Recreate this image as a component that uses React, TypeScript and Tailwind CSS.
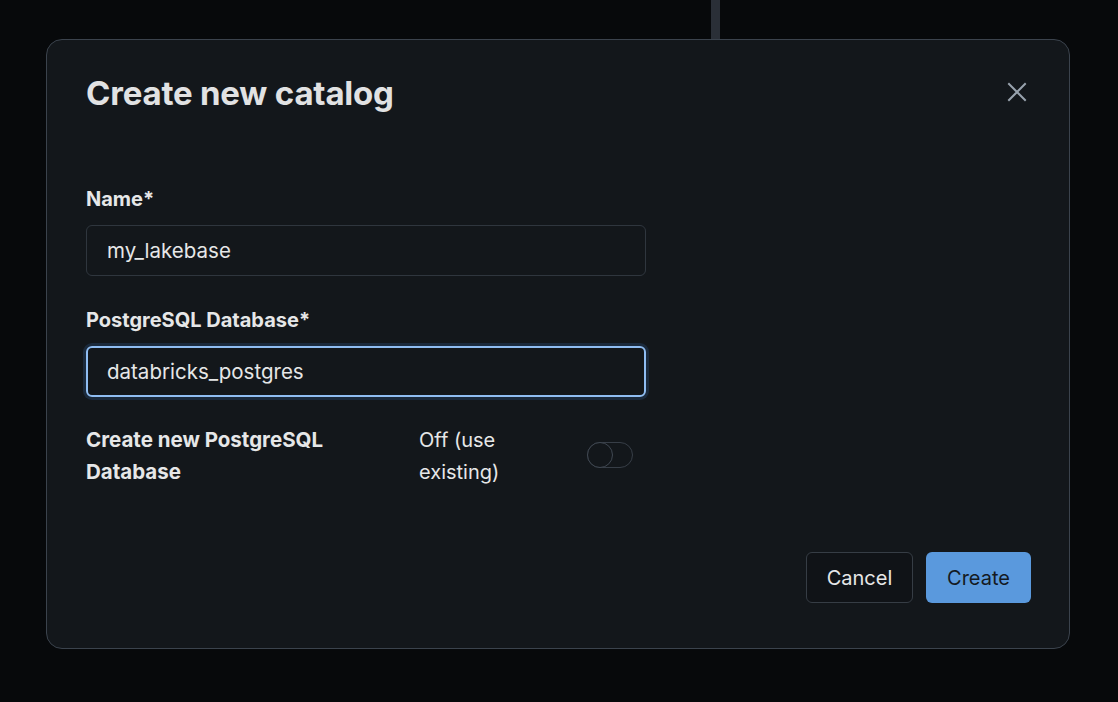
import React from "react";

export default function App() {
  return (
    <div
      className="w-[1118px] h-[702px] bg-[#07090b] overflow-hidden flex flex-col"
      style={{ fontFamily: "Inter, 'Noto Sans', sans-serif" }}
    >
      <div className="h-[39px] flex pl-[711px] shrink-0">
        <div className="w-[9px] h-full bg-[#2a2f37]" />
      </div>
      <div className="ml-[46px] w-[1024px] h-[610px] rounded-[16px] border border-[#3b434d] bg-[#13171b] flex flex-col pl-[39px] pr-[38px] pt-[32px] pb-[45px]">
        <div className="flex items-start justify-between">
          <h1 className="text-[33px] leading-[42px] font-bold text-[#e1e2e3] tracking-[-0.2px]">
            Create new catalog
          </h1>
          <button className="mt-[8px] mr-[2px] w-[24px] h-[24px] flex items-center justify-center text-[#98a2ad]">
            <svg width="20" height="20" viewBox="0 0 20 20" fill="none" stroke="currentColor" strokeWidth="2" strokeLinecap="square">
              <path d="M2 2 L18 18 M18 2 L2 18" />
            </svg>
          </button>
        </div>

        <div className="mt-[71px] w-[560px] flex flex-col">
          <label className="text-[20px] leading-[28px] font-bold text-[#e6e7e8]">Name*</label>
          <div className="mt-[12px] h-[51px] rounded-[6px] border border-[#2f363e] flex items-center pt-[2px] px-[20px] text-[20.5px] text-[#e6e7e8]">
            my_lakebase
          </div>

          <label className="mt-[30px] text-[20px] leading-[28px] font-bold text-[#e6e7e8]">
            PostgreSQL Database*
          </label>
          <div className="mt-[12px] h-[51px] rounded-[6px] border-2 border-[#8fbdf2] ring-[3px] ring-[#1b2a3c] flex items-center pt-[2px] px-[19px] text-[20.5px] text-[#e6e7e8]">
            databricks_postgres
          </div>

          <div className="mt-[27px] flex items-start">
            <div className="w-[333px] text-[20.5px] leading-[32px] font-bold text-[#e6e7e8]">
              Create new PostgreSQL
              <br />
              Database
            </div>
            <div className="w-[168px] text-[20px] leading-[32px] text-[#e6e7e8]">
              Off (use
              <br />
              existing)
            </div>
            <div className="mt-[18px] relative w-[46px] h-[26px] rounded-full border border-[#373e47]">
              <div className="absolute -left-px -top-px w-[26px] h-[26px] rounded-full border border-[#404852] bg-[#13171b]" />
            </div>
          </div>
        </div>

        <div className="mt-auto flex justify-end gap-[13px]">
          <button className="w-[107px] h-[51px] rounded-[6px] border border-[#363d45] bg-[#101317] text-[20px] text-[#e6e7e8]">
            Cancel
          </button>
          <button className="w-[105px] h-[51px] rounded-[6px] bg-[#5a99dd] text-[20px] text-[#141a22]">
            Create
          </button>
        </div>
      </div>
    </div>
  );
}
